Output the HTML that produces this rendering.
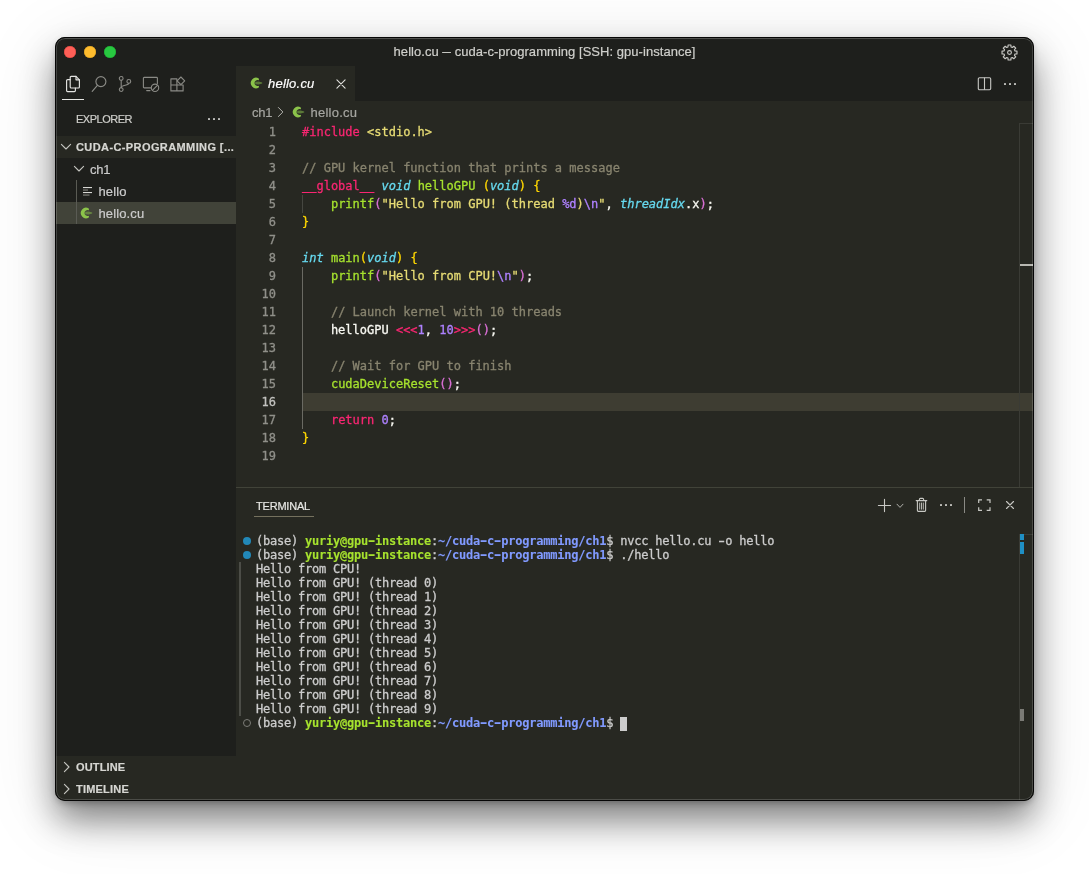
<!DOCTYPE html>
<html lang="en">
<head>
<meta charset="utf-8">
<title>hello.cu — cuda-c-programming [SSH: gpu-instance]</title>
<style>
*{box-sizing:border-box;margin:0;padding:0}
html,body{width:1089px;height:874px;background:#fff;overflow:hidden}
body{position:relative;font-family:"Liberation Sans",sans-serif;font-size:13px;color:#ccc;-webkit-font-smoothing:antialiased}
.abs{position:absolute}
#shadow{position:absolute;left:56px;top:38px;width:977px;height:762px;border-radius:10px;
 box-shadow:0 20px 34px 0 rgba(0,0,0,.45),0 12px 76px 0 rgba(0,0,0,.13),0 3px 7px 0 rgba(0,0,0,.27)}
#win{position:absolute;left:55px;top:37px;width:979px;height:764px;border-radius:10px;background:#1e1f1c;overflow:hidden}
#win .in{position:absolute;left:0;top:0;width:979px;height:764px;-webkit-text-stroke:.2px;will-change:transform}
#edge{position:absolute;left:0;top:0;width:979px;height:764px;border-radius:10px;border:1px solid #060606;pointer-events:none;z-index:51}
#rim{position:absolute;left:1px;top:1px;width:977px;height:762px;border-radius:9px;border:1px solid rgba(255,255,255,.17);border-top-color:rgba(255,255,255,.22);pointer-events:none;z-index:50}
.mono{font-family:"DejaVu Sans Mono","Liberation Mono",monospace;-webkit-text-stroke:.3px}
/* title bar */
#title{left:0;top:0;width:979px;height:29px;background:#1e1f1c}
#title .tt{position:absolute;left:0;width:979px;top:7px;text-align:center;font-size:13px;color:#cfcfcb;letter-spacing:.04px}
.tl{position:absolute;top:8.8px;width:12px;height:12px;border-radius:50%}
/* sidebar */
#side{left:0;top:29px;width:181px;height:735px;background:#1e1f1c}
#editor{left:181px;top:29px;width:798px;height:422px;background:#272822}
#tabs{left:0;top:0;width:798px;height:35px;background:#1e1f1c}
#tab{left:0;top:0;width:119px;height:35px;background:#272822}
#panel{left:181px;top:450px;width:798px;height:314px;background:#272822;border-top:1px solid #414339}
.row{height:22px;line-height:22px;font-size:13px;color:#cccccc;letter-spacing:.15px;white-space:nowrap}
.cl{position:absolute;left:0;height:18px;line-height:18px;font-size:12px;white-space:pre;color:#f8f8f2}
.ln{position:absolute;width:40px;text-align:right;height:18px;line-height:18px;font-size:12px;color:#90908a}
.bc{height:22px;line-height:22px;font-size:13px;color:#a6a6a1;letter-spacing:.1px;white-space:nowrap}
.ln.act{color:#c2c2bf}
.ty{color:#66d9ef;font-style:italic}
.k{color:#f92672}.s{color:#e6db74}.c{color:#88846f}.f{color:#a6e22e}.t{color:#66d9ef;font-style:italic}.n{color:#ae81ff}
.b1{color:#ffd700}.b2{color:#da70d6}.b3{color:#179fff}
.tr{position:absolute;left:20px;height:14px;line-height:14px;font-size:12px;white-space:pre;color:#cccccc;letter-spacing:-.2246px}
.hy{display:inline-block;transform:scaleX(1.55)}
.g{color:#a6e22e;font-weight:bold;-webkit-text-stroke:.1px}.bl{color:#819aff;font-weight:bold;-webkit-text-stroke:.1px}
</style>
</head>
<body>
<svg width="0" height="0" style="position:absolute"><defs>
 <g id="cuico">
  <path d="M8.8 1.5 A5.25 5.25 0 1 0 8.8 10.5 L9 8.7 A3.05 3.05 0 1 1 9 3.3 Z" fill="#8bc34a"/>
  <path d="M5.2 4.7 L8.8 4.5 L12.2 5.5 V6.5 L8.8 7.5 L5.2 7.3 Z" fill="#86bb4a" opacity=".55"/>
 </g>
</defs></svg>
<div id="shadow"></div>
<div id="win"><div class="in">
<div id="edge"></div><div id="rim"></div>

<!-- TITLE BAR -->
<div id="title" class="abs">
 <div class="tl" style="left:9px;background:#fe5f57;box-shadow:inset 0 0 0 .5px #d9463e"></div>
 <div class="tl" style="left:29px;background:#febc2e;box-shadow:inset 0 0 0 .5px #d89e1f"></div>
 <div class="tl" style="left:49px;background:#28c840;box-shadow:inset 0 0 0 .5px #1ea732"></div>
 <svg class="abs" style="left:946.3px;top:6.5px" width="17" height="17" viewBox="0 0 17 17" fill="none" stroke="#c8c8c4" stroke-width="1.15" stroke-linejoin="round"><path d="M6.98 3.01 L7.10 1.03 L9.90 1.03 L10.02 3.01 L11.31 3.54 L12.79 2.23 L14.77 4.21 L13.46 5.69 L13.99 6.98 L15.97 7.10 L15.97 9.90 L13.99 10.02 L13.46 11.31 L14.77 12.79 L12.79 14.77 L11.31 13.46 L10.02 13.99 L9.90 15.97 L7.10 15.97 L6.98 13.99 L5.69 13.46 L4.21 14.77 L2.23 12.79 L3.54 11.31 L3.01 10.02 L1.03 9.90 L1.03 7.10 L3.01 6.98 L3.54 5.69 L2.23 4.21 L4.21 2.23 L5.69 3.54Z"/><circle cx="8.5" cy="8.5" r="1.9"/></svg>
 <div class="tt">hello.cu <span style="display:inline-block;transform:scaleX(.66);margin:0 -2.2px">—</span> cuda-c-programming [SSH: gpu-instance]</div>
</div>

<!-- SIDEBAR -->
<div id="side" class="abs">
 <!-- activity icons (local: page-55, page-66) -->
 <svg class="abs" style="left:10px;top:9px" width="16" height="18" viewBox="0 0 16 18" fill="none" stroke="#e4e4e1" stroke-width="1.15" stroke-linejoin="round" stroke-linecap="round">
  <path d="M5.2 3.2 V2.4 a1 1 0 0 1 1-1 H11 L14.4 4.8 V12 a1 1 0 0 1-1 1 H6.2 a1 1 0 0 1-1-1 V3.2z" fill="#1e1f1c"/>
  <path d="M11 1.4 V4.8 H14.4"/>
  <path d="M5.2 4.6 H2.6 a1 1 0 0 0-1 1 V15.6 a1 1 0 0 0 1 1 H9.4 a1 1 0 0 0 1-1 V13"/>
 </svg>
 <div class="abs" style="left:7px;top:33px;width:22px;height:1px;background:#e7e7e4"></div>
 <svg class="abs" style="left:36px;top:9px" width="16" height="18" viewBox="0 0 16 18" fill="none" stroke="#8b8b86" stroke-width="1.15" stroke-linecap="round">
  <circle cx="9.9" cy="6.6" r="5"/><path d="M6.4 10.3 L1.2 16.4"/>
 </svg>
 <svg class="abs" style="left:62px;top:9px" width="16" height="18" viewBox="0 0 16 18" fill="none" stroke="#8b8b86" stroke-width="1.1" stroke-linecap="round">
  <circle cx="4.2" cy="3.4" r="1.9"/><circle cx="4.2" cy="14.6" r="1.9"/><circle cx="11.8" cy="6.4" r="1.9"/>
  <path d="M4.2 5.3 V12.7"/><path d="M11.8 8.3 C11.8 11 4.2 9.6 4.2 12.7"/>
 </svg>
 <svg class="abs" style="left:87px;top:9px" width="18" height="18" viewBox="0 0 18 18" fill="none" stroke="#8b8b86" stroke-width="1.1" stroke-linecap="round" stroke-linejoin="round">
  <path d="M9 12.9 H2.2 a.8 .8 0 0 1-.8-.8 V3.2 a.8 .8 0 0 1 .8-.8 H14.6 a.8 .8 0 0 1 .8 .8 V8.4"/>
  <path d="M4.7 15.6 H8"/>
  <circle cx="13" cy="12.8" r="3.7" fill="#1e1f1c"/><path d="M10.6 15.2 L15.4 10.4"/>
 </svg>
 <svg class="abs" style="left:114px;top:9px" width="18" height="18" viewBox="0 0 18 18" fill="none" stroke="#8b8b86" stroke-width="1.1" stroke-linejoin="round">
  <path d="M1.9 3.9 H7.9 V10 H1.9z M1.9 10 H7.9 V15.9 H1.9z M7.9 10 H14.1 V15.9 H7.9z"/>
  <path d="M11.9 2 L15.7 5.8 L11.9 9.6 L8.1 5.8z"/>
 </svg>

 <div class="abs" style="left:21px;top:45px;height:16px;line-height:16px;font-size:11px;color:#cfcfcb;letter-spacing:-.5px">EXPLORER</div>
 <div class="abs" style="left:153px;top:52px;width:2.1px;height:2.1px;border-radius:.4px;background:#c8c8c4;box-shadow:5px 0 0 #c8c8c4,10px 0 0 #c8c8c4"></div>

 <div class="abs" style="left:0;top:70px;width:181px;height:22px;background:#272822"></div>
 <svg class="abs" style="left:5px;top:77px" width="12" height="8" viewBox="0 0 12 8" fill="none" stroke="#c5c5c0" stroke-width="1.1" stroke-linecap="round" stroke-linejoin="round"><path d="M1.4 1.4 L6 6 L10.6 1.4"/></svg>
 <div class="abs" style="left:21px;top:70px;height:22px;line-height:22px;font-size:11px;font-weight:bold;color:#d6d6d2;letter-spacing:.4px;white-space:nowrap">CUDA-C-PROGRAMMING [...</div>

 <svg class="abs" style="left:18px;top:99px" width="12" height="8" viewBox="0 0 12 8" fill="none" stroke="#c5c5c0" stroke-width="1.1" stroke-linecap="round" stroke-linejoin="round"><path d="M1.4 1.4 L6 6 L10.6 1.4"/></svg>
 <div class="abs row" style="left:35px;top:93px;letter-spacing:-.25px">ch1</div>

 <div class="abs" style="left:0;top:136px;width:181px;height:22px;background:#414339"></div>
 <div class="abs" style="left:21px;top:114px;width:1px;height:44px;background:#5a5b54"></div>

 <svg class="abs" style="left:28px;top:120px" width="10" height="10" viewBox="0 0 10 10" >
  <rect x="0" y="1" width="9" height="1.1" fill="#d8d8d4"/><rect x="0" y="3.5" width="5" height="1.1" fill="#85857f"/>
  <rect x="0" y="6" width="9" height="1.1" fill="#d8d8d4"/><rect x="0" y="8.5" width="6.5" height="1.1" fill="#85857f"/>
 </svg>
 <div class="abs row" style="left:43.4px;top:115px">hello</div>

 <svg class="abs cu" style="left:24.9px;top:141px" width="13" height="12" viewBox="0 0 13 12"><use href="#cuico"/></svg>
 <div class="abs row" style="left:43.4px;top:137px">hello.cu</div>

 <!-- bottom sections -->
 <div class="abs" style="left:0;top:690px;width:181px;height:45px;background:#272822"></div>
 <svg class="abs" style="left:8px;top:695px" width="8" height="12" viewBox="0 0 8 12" fill="none" stroke="#c5c5c0" stroke-width="1.1" stroke-linecap="round" stroke-linejoin="round"><path d="M1.4 1.4 L6 6 L1.4 10.6"/></svg>
 <div class="abs" style="left:21px;top:690px;height:22px;line-height:22px;font-size:11px;font-weight:bold;color:#d6d6d2;letter-spacing:.15px">OUTLINE</div>
 <svg class="abs" style="left:8px;top:717px" width="8" height="12" viewBox="0 0 8 12" fill="none" stroke="#c5c5c0" stroke-width="1.1" stroke-linecap="round" stroke-linejoin="round"><path d="M1.4 1.4 L6 6 L1.4 10.6"/></svg>
 <div class="abs" style="left:21px;top:712px;height:22px;line-height:22px;font-size:11px;font-weight:bold;color:#d6d6d2;letter-spacing:.2px">TIMELINE</div>
</div>

<!-- EDITOR -->
<div id="editor" class="abs">

 <div id="tabs" class="abs"><div id="tab" class="abs">
   <svg class="abs" style="left:14px;top:11.1px" width="13" height="12" viewBox="0 0 13 12"><use href="#cuico"/></svg>
   <div class="abs" style="left:32px;top:6.5px;height:22px;line-height:22px;font-size:13px;font-style:italic;color:#ffffff;letter-spacing:.22px">hello.cu</div>
   <svg class="abs" style="left:100.1px;top:13.1px" width="10" height="10" viewBox="0 0 10 10" fill="none" stroke="#e0e0dc" stroke-width="1.1" stroke-linecap="round"><path d="M.9 .9 L9.1 9.1 M9.1 .9 L.9 9.1"/></svg>
  </div>
  <svg class="abs" style="left:741px;top:11px" width="15" height="14" viewBox="0 0 15 14" fill="none" stroke="#c8c8c4" stroke-width="1.1" stroke-linejoin="round"><rect x="1.3" y=".7" width="12.4" height="12.1" rx="1.2"/><path d="M7.5 .7 V12.8"/></svg>
  <div class="abs" style="left:767.8px;top:16.9px;width:2.1px;height:2.1px;border-radius:.4px;background:#c8c8c4;box-shadow:5px 0 0 #c8c8c4,10px 0 0 #c8c8c4"></div>
 </div>
 <!-- breadcrumbs -->
 <div class="abs bc" style="left:16px;top:36px;letter-spacing:-.3px">ch1</div>
 <svg class="abs" style="left:41px;top:40px" width="8" height="12" viewBox="0 0 8 12" fill="none" stroke="#b4b4af" stroke-width="1" stroke-linecap="round" stroke-linejoin="round"><path d="M1.4 1.5 L5.9 6 L1.4 10.5"/></svg>
 <svg class="abs" style="left:56.1px;top:40px" width="13" height="12" viewBox="0 0 13 12"><use href="#cuico"/></svg>
 <div class="abs bc" style="left:74.5px;top:36px;letter-spacing:.25px">hello.cu</div>
 <!-- code -->
 <div class="abs" style="left:66px;top:327px;width:732px;height:18px;background:#3e3d32"></div>
 <div class="abs" style="left:66px;top:129px;width:1px;height:18px;background:#464741"></div>
 <div class="abs" style="left:66px;top:201px;width:1px;height:162px;background:#6a6a63"></div>
 <div class="ln mono" style="left:0;top:57px">1</div><div class="cl mono" style="left:66px;top:57px"><span class="k">#include</span> <span class="s">&lt;stdio.h&gt;</span></div>
 <div class="ln mono" style="left:0;top:75px">2</div><div class="cl mono" style="left:66px;top:75px"></div>
 <div class="ln mono" style="left:0;top:93px">3</div><div class="cl mono" style="left:66px;top:93px"><span class="c">// GPU kernel function that prints a message</span></div>
 <div class="ln mono" style="left:0;top:111px">4</div><div class="cl mono" style="left:66px;top:111px"><span class="k">__global__</span> <span class="ty">void</span> <span class="f">helloGPU</span> <span class="b1">(</span><span class="ty">void</span><span class="b1">)</span> <span class="b1">{</span></div>
 <div class="ln mono" style="left:0;top:129px">5</div><div class="cl mono" style="left:66px;top:129px">    <span class="f">printf</span><span class="b2">(</span><span class="s">"Hello from GPU! (thread </span><span class="n">%d</span><span class="s">)</span><span class="n">\n</span><span class="s">"</span>, <span class="ty">threadIdx</span>.x<span class="b2">)</span>;</div>
 <div class="ln mono" style="left:0;top:147px">6</div><div class="cl mono" style="left:66px;top:147px"><span class="b1">}</span></div>
 <div class="ln mono" style="left:0;top:165px">7</div><div class="cl mono" style="left:66px;top:165px"></div>
 <div class="ln mono" style="left:0;top:183px">8</div><div class="cl mono" style="left:66px;top:183px"><span class="ty">int</span> <span class="f">main</span><span class="b1">(</span><span class="ty">void</span><span class="b1">)</span> <span class="b1">{</span></div>
 <div class="ln mono" style="left:0;top:201px">9</div><div class="cl mono" style="left:66px;top:201px">    <span class="f">printf</span><span class="b2">(</span><span class="s">"Hello from CPU!</span><span class="n">\n</span><span class="s">"</span><span class="b2">)</span>;</div>
 <div class="ln mono" style="left:0;top:219px">10</div><div class="cl mono" style="left:66px;top:219px"></div>
 <div class="ln mono" style="left:0;top:237px">11</div><div class="cl mono" style="left:66px;top:237px">    <span class="c">// Launch kernel with 10 threads</span></div>
 <div class="ln mono" style="left:0;top:255px">12</div><div class="cl mono" style="left:66px;top:255px">    helloGPU <span class="k">&lt;&lt;&lt;</span><span class="n">1</span>, <span class="n">10</span><span class="k">&gt;&gt;&gt;</span><span class="b2">()</span>;</div>
 <div class="ln mono" style="left:0;top:273px">13</div><div class="cl mono" style="left:66px;top:273px"></div>
 <div class="ln mono" style="left:0;top:291px">14</div><div class="cl mono" style="left:66px;top:291px">    <span class="c">// Wait for GPU to finish</span></div>
 <div class="ln mono" style="left:0;top:309px">15</div><div class="cl mono" style="left:66px;top:309px">    <span class="f">cudaDeviceReset</span><span class="b2">()</span>;</div>
 <div class="ln mono act" style="left:0;top:327px">16</div><div class="cl mono" style="left:66px;top:327px"></div>
 <div class="ln mono" style="left:0;top:345px">17</div><div class="cl mono" style="left:66px;top:345px">    <span class="k">return</span> <span class="n">0</span>;</div>
 <div class="ln mono" style="left:0;top:363px">18</div><div class="cl mono" style="left:66px;top:363px"><span class="b1">}</span></div>
 <div class="ln mono" style="left:0;top:381px">19</div><div class="cl mono" style="left:66px;top:381px"></div>
 <div class="abs" style="left:783px;top:57px;width:15px;height:365px;border-left:1px solid #3a3b35;border-top:1px solid #3a3b35"></div>
 <div class="abs" style="left:784px;top:198px;width:14px;height:2px;background:#b8b8b2"></div>
</div>

<!-- PANEL -->
<div id="panel" class="abs">
 <div class="abs" style="left:20px;top:9px;height:18px;line-height:18px;font-size:11px;color:#e7e7e4;letter-spacing:-.2px">TERMINAL</div>
 <div class="abs" style="left:18px;top:28px;width:60px;height:1px;background:#75715e"></div>
 <!-- panel actions -->
 <svg class="abs" style="left:641px;top:10.4px" width="15" height="15" viewBox="0 0 15 15" fill="none" stroke="#c8c8c4" stroke-width="1.1" stroke-linecap="round"><path d="M7.5 1.4 V13.6 M1.4 7.5 H13.6"/></svg>
 <svg class="abs" style="left:660px;top:15px" width="8" height="6" viewBox="0 0 8 6" fill="none" stroke="#b0b0ab" stroke-width="1" stroke-linecap="round" stroke-linejoin="round"><path d="M1 1.2 L4 4.4 L7 1.2"/></svg>
 <svg class="abs" style="left:679px;top:9.3px" width="13" height="16" viewBox="0 0 13 16" fill="none" stroke="#c8c8c4" stroke-width="1.1" stroke-linecap="round" stroke-linejoin="round">
  <path d="M1.2 3.6 H11.8"/><path d="M4.4 3.4 V2.4 a1 1 0 0 1 1-1 H7.6 a1 1 0 0 1 1 1 V3.4"/>
  <path d="M2.4 3.8 V13.2 a1.2 1.2 0 0 0 1.2 1.2 H9.4 a1.2 1.2 0 0 0 1.2-1.2 V3.8"/>
  <path d="M4.7 6 V12.2 M6.5 6 V12.2 M8.3 6 V12.2" stroke-width=".9"/>
 </svg>
 <div class="abs" style="left:704px;top:16.4px;width:2.1px;height:2.1px;border-radius:.4px;background:#c8c8c4;box-shadow:5px 0 0 #c8c8c4,10px 0 0 #c8c8c4"></div>
 <div class="abs" style="left:728px;top:9px;width:1px;height:16px;background:#8a8a85"></div>
 <svg class="abs" style="left:741px;top:9.6px" width="15" height="15" viewBox="0 0 15 15" fill="none" stroke="#c8c8c4" stroke-width="1.2" stroke-linecap="butt" stroke-linejoin="miter">
  <path d="M1.7 5 V1.8 H5 M9.7 1.8 H13 V5 M13 9.2 V12.4 H9.7 M5 12.4 H1.7 V9.2"/>
 </svg>
 <svg class="abs" style="left:769px;top:12.3px" width="10" height="10" viewBox="0 0 10 10" fill="none" stroke="#c8c8c4" stroke-width="1.1" stroke-linecap="round"><path d="M1.5 1.5 L8.5 8.5 M8.5 1.5 L1.5 8.5"/></svg>
 <!-- terminal decorations -->
 <div class="abs" style="left:7px;top:49px;width:8.4px;height:8.4px;border-radius:50%;background:#2288b8"></div>
 <div class="abs" style="left:7px;top:63px;width:8.4px;height:8.4px;border-radius:50%;background:#2288b8"></div>
 <div class="abs" style="left:3px;top:74px;width:2px;height:154px;background:#4c4d47"></div>
 <div class="abs" style="left:6.9px;top:230.7px;width:8.3px;height:8.3px;border-radius:50%;border:1.5px solid #7c7c77"></div>
 <div class="tr mono" style="top:46px">(base) <span class="g">yuriy@gpu<span class="hy">-</span>instance</span>:<span class="bl">~/cuda<span class="hy">-</span>c<span class="hy">-</span>programming/ch1</span>$ nvcc hello.cu <span class="hy">-</span>o hello</div>
 <div class="tr mono" style="top:60px">(base) <span class="g">yuriy@gpu<span class="hy">-</span>instance</span>:<span class="bl">~/cuda<span class="hy">-</span>c<span class="hy">-</span>programming/ch1</span>$ ./hello</div>
 <div class="tr mono" style="top:74px">Hello from CPU!</div>
 <div class="tr mono" style="top:88px">Hello from GPU! (thread 0)</div>
 <div class="tr mono" style="top:102px">Hello from GPU! (thread 1)</div>
 <div class="tr mono" style="top:116px">Hello from GPU! (thread 2)</div>
 <div class="tr mono" style="top:130px">Hello from GPU! (thread 3)</div>
 <div class="tr mono" style="top:144px">Hello from GPU! (thread 4)</div>
 <div class="tr mono" style="top:158px">Hello from GPU! (thread 5)</div>
 <div class="tr mono" style="top:172px">Hello from GPU! (thread 6)</div>
 <div class="tr mono" style="top:186px">Hello from GPU! (thread 7)</div>
 <div class="tr mono" style="top:200px">Hello from GPU! (thread 8)</div>
 <div class="tr mono" style="top:214px">Hello from GPU! (thread 9)</div>
 <div class="tr mono" style="top:228px">(base) <span class="g">yuriy@gpu<span class="hy">-</span>instance</span>:<span class="bl">~/cuda<span class="hy">-</span>c<span class="hy">-</span>programming/ch1</span>$ </div>
 <div class="abs" style="left:384px;top:228.5px;width:7px;height:14px;background:#cccccc"></div>
 <div class="abs" style="left:783px;top:46px;width:15px;height:268px;border-left:1px solid #3a3b35;border-top:1px solid #3a3b35"></div>
 <div class="abs" style="left:784px;top:46px;width:4px;height:6px;background:#1f8fc4"></div>
 <div class="abs" style="left:784px;top:54px;width:4px;height:12px;background:#1f8fc4"></div>
 <div class="abs" style="left:784px;top:221px;width:4px;height:12px;background:#7a7a75"></div>
</div>

</div></div>
</body>
</html>
